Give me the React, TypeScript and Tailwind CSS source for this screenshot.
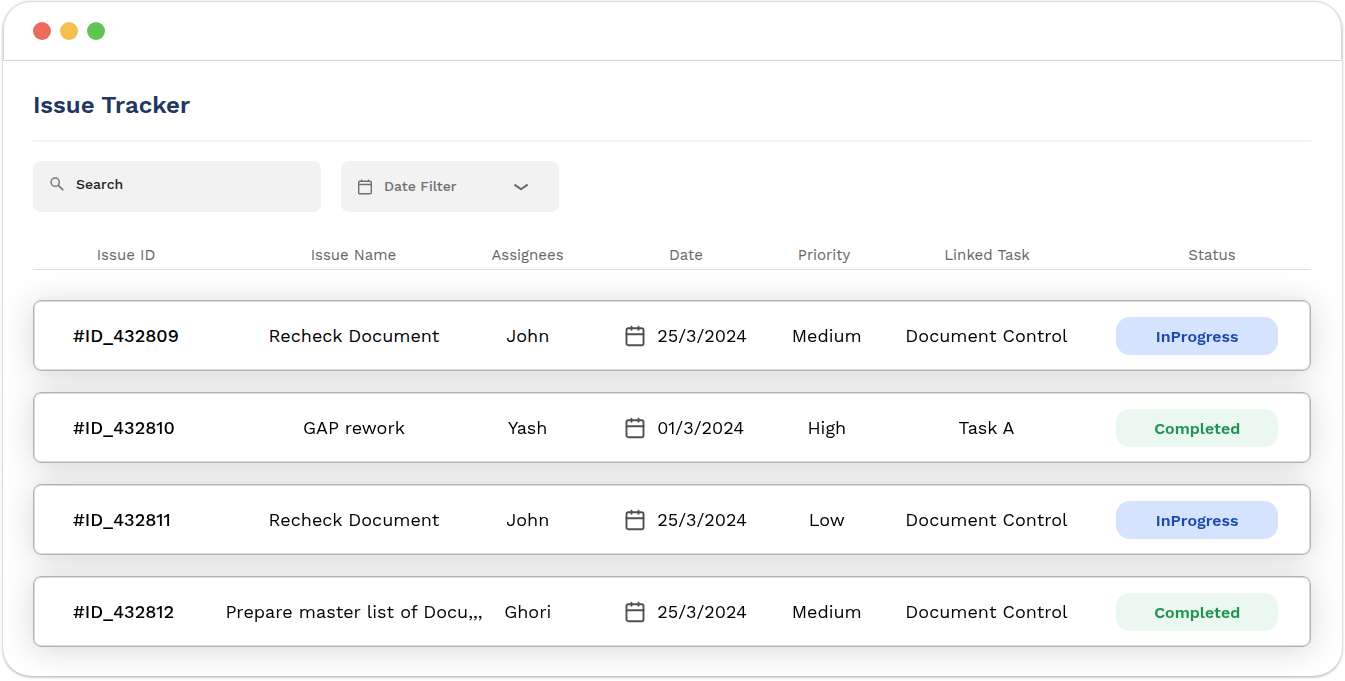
import React, { useState } from "react";

type Status = "InProgress" | "Completed";

interface Issue {
  id: string;
  name: string;
  assignee: string;
  date: string;
  priority: string;
  task: string;
  status: Status;
}

const ISSUES: Issue[] = [
  {
    id: "#ID_432809",
    name: "Recheck Document",
    assignee: "John",
    date: "25/3/2024",
    priority: "Medium",
    task: "Document Control",
    status: "InProgress",
  },
  {
    id: "#ID_432810",
    name: "GAP rework",
    assignee: "Yash",
    date: "01/3/2024",
    priority: "High",
    task: "Task A",
    status: "Completed",
  },
  {
    id: "#ID_432811",
    name: "Recheck Document",
    assignee: "John",
    date: "25/3/2024",
    priority: "Low",
    task: "Document Control",
    status: "InProgress",
  },
  {
    id: "#ID_432812",
    name: "Prepare master list of Docu,,,",
    assignee: "Ghori",
    date: "25/3/2024",
    priority: "Medium",
    task: "Document Control",
    status: "Completed",
  },
];

const STATUS_STYLES: Record<Status, string> = {
  InProgress: "bg-[#d6e3ff] text-[#1e4bb0]",
  Completed: "bg-[#ebf8f0] text-[#1f9254]",
};

// Header and rows share the same column proportions
const COLUMNS =
  "grid grid-cols-[186fr_269fr_79fr_210fr_100fr_220fr_214fr] items-center";

const SearchIcon = () => (
  <svg width="14" height="14" viewBox="0 0 14 14" fill="none" stroke="#777777">
    <circle cx="5.2" cy="5.2" r="4.1" strokeWidth="1.5" />
    <path d="M8.3 8.3 13.2 13.2" strokeWidth="1.7" />
  </svg>
);

const FilterCalendarIcon = () => (
  <svg width="14" height="16" viewBox="0 0 14 16" fill="none" stroke="#6f6f6f">
    <rect x="0.7" y="2.2" width="12.6" height="12.6" rx="1" strokeWidth="1.4" />
    <path d="M0.7 5.5H13.3M3.5 0.4V2.5M10.5 0.4V2.5" strokeWidth="1.3" />
  </svg>
);

const CalendarIcon = () => (
  <svg
    className="shrink-0"
    width="20"
    height="22"
    viewBox="0 0 20 22"
    fill="none"
    stroke="#505050"
    strokeWidth="1.9"
    strokeLinecap="round"
  >
    <rect x="1.5" y="3.3" width="17" height="16.9" rx="1.8" />
    <path d="M1.5 9.2H18.5M6.5 1.8V4.8M13.5 1.8V4.8" />
  </svg>
);

const ChevronIcon = () => (
  <svg
    className="pointer-events-none absolute right-[30px]"
    width="16"
    height="8"
    viewBox="0 0 16 8"
    fill="none"
    stroke="#666666"
    strokeWidth="2"
    strokeLinejoin="round"
  >
    <path d="M1.4 1.6L8 6.2L14.6 1.6" />
  </svg>
);

function IssueRow({ issue }: { issue: Issue }) {
  return (
    <tr
      className={`${COLUMNS} h-[71px] rounded-lg border border-[#b4b4b4] bg-white text-center text-lg text-black shadow-[inset_0_0_0_1px_#dadada]`}
    >
      <td className="pl-[39px] text-left font-medium">{issue.id}</td>
      <td className="whitespace-nowrap">{issue.name}</td>
      <td>{issue.assignee}</td>
      <td className="flex items-center gap-3 pl-[58px]">
        <CalendarIcon />
        {issue.date}
      </td>
      <td>{issue.priority}</td>
      <td className="whitespace-nowrap">{issue.task}</td>
      <td className="pl-5 pr-8">
        <span
          className={`block h-[38px] rounded-[14px] text-base/[40px] font-semibold ${STATUS_STYLES[issue.status]}`}
        >
          {issue.status}
        </span>
      </td>
    </tr>
  );
}

export default function App() {
  const [search, setSearch] = useState("");
  const [range, setRange] = useState("");

  const issues = ISSUES.filter((issue) =>
    `${issue.id} ${issue.name}`.toLowerCase().includes(search.toLowerCase())
  );

  return (
    <div className="bg-white px-[3px] pb-1 pt-px font-['Work_Sans','Inter',sans-serif]">
      <div className="rounded-[28px] shadow-[0_1px_3px_rgba(0,0,0,0.35)]">
        {/* Window bar */}
        <header className="flex h-[60px] items-center gap-[9px] rounded-t-[28px] border border-[#d6d6d6] px-[29px]">
          <span className="size-[18px] rounded-full bg-[#ed6a5e]" />
          <span className="size-[18px] rounded-full bg-[#f5bf4f]" />
          <span className="size-[18px] rounded-full bg-[#61c554]" />
        </header>

        <main className="pb-[29px] pl-[30px] pr-[31px] pt-7">
          <h1 className="border-b-2 border-[#eef6fa] pb-[19px] text-2xl font-semibold text-[#22375f]">
            Issue Tracker
          </h1>

          {/* Filters */}
          <div className="mt-[19px] flex gap-5">
            <label className="flex h-[51px] w-72 items-center gap-3 rounded-lg bg-[#f2f2f2] px-[17px] pb-[5px]">
              <SearchIcon />
              <input
                type="text"
                aria-label="Search"
                placeholder="Search"
                value={search}
                onChange={(e) => setSearch(e.target.value)}
                className="min-w-0 flex-1 bg-transparent text-sm font-medium text-[#222222] outline-none placeholder:text-[#222222]"
              />
            </label>
            <label className="relative flex h-[51px] w-[218px] items-center gap-3 rounded-lg bg-[#f2f2f2] px-[17px]">
              <FilterCalendarIcon />
              <select
                aria-label="Date Filter"
                value={range}
                onChange={(e) => setRange(e.target.value)}
                className="min-w-0 flex-1 appearance-none bg-transparent pb-0.5 text-sm font-medium text-[#6f6f6f] outline-none"
              >
                <option value="">Date Filter</option>
              </select>
              <ChevronIcon />
            </label>
          </div>

          {/* Issues */}
          <table className="mt-[30px] block">
            <thead className="block border-b border-[#dedede]">
              <tr className={`${COLUMNS} h-[27px] text-[15px] text-[#666666]`}>
                <th className="font-normal">Issue ID</th>
                <th className="font-normal">Issue Name</th>
                <th className="font-normal">Assignees</th>
                <th className="pl-7 font-normal">Date</th>
                <th className="pr-1.5 font-normal">Priority</th>
                <th className="font-normal">Linked Task</th>
                <th className="pl-4 font-normal">Status</th>
              </tr>
            </thead>
            <tbody className="mt-[30px] flex flex-col gap-[21px] drop-shadow-[0_3px_15px_rgba(0,0,0,0.16)]">
              {issues.map((issue) => (
                <IssueRow key={issue.id} issue={issue} />
              ))}
            </tbody>
          </table>
        </main>
      </div>
    </div>
  );
}
